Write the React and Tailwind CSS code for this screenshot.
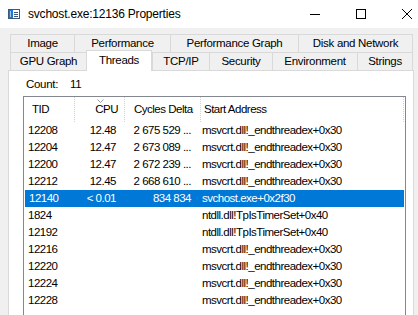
import React from "react";

const rows = [
  { tid: "12208", cpu: "12.48", cycles: "2 675 529 ...", addr: "msvcrt.dll!_endthreadex+0x30" },
  { tid: "12204", cpu: "12.47", cycles: "2 673 089 ...", addr: "msvcrt.dll!_endthreadex+0x30" },
  { tid: "12200", cpu: "12.47", cycles: "2 672 239 ...", addr: "msvcrt.dll!_endthreadex+0x30" },
  { tid: "12212", cpu: "12.45", cycles: "2 668 610 ...", addr: "msvcrt.dll!_endthreadex+0x30" },
  { tid: "12140", cpu: "< 0.01", cycles: "834 834", addr: "svchost.exe+0x2f30", selected: true },
  { tid: "1824", cpu: "", cycles: "", addr: "ntdll.dll!TpIsTimerSet+0x40" },
  { tid: "12192", cpu: "", cycles: "", addr: "ntdll.dll!TpIsTimerSet+0x40" },
  { tid: "12216", cpu: "", cycles: "", addr: "msvcrt.dll!_endthreadex+0x30" },
  { tid: "12220", cpu: "", cycles: "", addr: "msvcrt.dll!_endthreadex+0x30" },
  { tid: "12224", cpu: "", cycles: "", addr: "msvcrt.dll!_endthreadex+0x30" },
  { tid: "12228", cpu: "", cycles: "", addr: "msvcrt.dll!_endthreadex+0x30" },
];

const topTabs = [
  { label: "Image", w: "w-[64px]" },
  { label: "Performance", w: "w-[96px]" },
  { label: "Performance Graph", w: "w-[128px]" },
  { label: "Disk and Network", w: "w-[115px]" },
];

const bottomTabs = [
  { label: "GPU Graph", w: "w-[76px]" },
  { label: "Threads", w: "w-[66px]", active: true },
  { label: "TCP/IP", w: "w-[57px]" },
  { label: "Security", w: "w-[63px]" },
  { label: "Environment", w: "w-[85px]" },
  { label: "Strings", w: "w-[56px]" },
];

function Tab({ label, w, active, last }) {
  if (active) {
    return (
      <div
        className={`${w} relative z-10 -mt-[2px] h-[21px] bg-white border-t border-l border-r border-[#d9d9d9] flex items-center justify-center pb-[1px] whitespace-nowrap`}
      >
        {label}
      </div>
    );
  }
  return (
    <div
      className={`${w} h-[18px] bg-[#f0f0f0] border-t border-l border-[#d9d9d9] ${last ? "border-r" : ""} flex items-center justify-center whitespace-nowrap`}
    >
      {label}
    </div>
  );
}

export default function App() {
  return (
    <div className="w-[418px] h-[315px] overflow-hidden bg-[#f0f0f0] text-[12px] text-black font-['Liberation_Sans',sans-serif] leading-none">
      {/* title bar */}
      <div className="h-[28px] bg-white flex items-center">
        <svg className="ml-[8px]" width="12" height="10" viewBox="0 0 12 10">
          <rect x="0.5" y="0.5" width="11" height="9" fill="#fff" stroke="#3c5a78" />
          <rect x="1" y="1" width="4" height="8" fill="#1e78d7" />
          <rect x="2" y="2" width="1" height="6" fill="#9cc8f0" />
          <rect x="6" y="3" width="4" height="1" fill="#3c5a78" />
          <rect x="6" y="5" width="4" height="1" fill="#3c5a78" />
          <rect x="6" y="7" width="4" height="1" fill="#3c5a78" />
        </svg>
        <span className="ml-[8px] text-[12px] tracking-[-0.2px] whitespace-nowrap">svchost.exe:12136 Properties</span>
        <div className="ml-auto flex h-full">
          <div className="w-[46px] flex items-center justify-center">
            <div className="w-[10px] h-px bg-black" />
          </div>
          <div className="w-[46px] flex items-center justify-center">
            <div className="w-[10px] h-[10px] border border-black" />
          </div>
          <div className="w-[34px] flex items-center pl-[18px]">
            <svg width="10" height="10" viewBox="0 0 10 10">
              <path d="M0 0L10 10M10 0L0 10" stroke="#000" strokeWidth="1" fill="none" />
            </svg>
          </div>
        </div>
      </div>

      {/* tabs */}
      <div className="pt-[6px] pl-[8px] text-[11.5px] tracking-[-0.3px]">
        <div className="ml-[2px] flex">
          {topTabs.map((t, i) => (
            <Tab key={t.label} {...t} last={i === topTabs.length - 1} />
          ))}
        </div>
        <div className="ml-[2px] flex items-start h-[18px]">
          {bottomTabs.map((t, i) => (
            <Tab key={t.label} {...t} last={i === bottomTabs.length - 1} />
          ))}
        </div>

        {/* panel */}
        <div className="w-[406px] h-[260px] bg-white border border-[#d9d9d9]">
          <div className="pl-[17px] pt-[7px] h-[14px] flex items-center box-content">
            <span>Count:</span>
            <span className="ml-[12px]">11</span>
          </div>

          <div className="ml-[14px] mt-[4px] w-[383px] h-[230px] border border-[#828790] bg-white tracking-[-0.5px]">
            {/* header */}
            <div className="flex h-[25px] whitespace-nowrap">
              <div className="w-[51px] h-full border-r border-dotted border-[#c5d3e2] flex items-center pl-[8px]">
                TID
              </div>
              <div className="relative w-[50px] h-full border-r border-dotted border-[#c5d3e2] flex items-center justify-end pr-[6px]">
                <svg className="absolute left-[22px] top-[2px]" width="7" height="4" viewBox="0 0 7 4">
                  <path d="M0.5 0.5L3.5 3.5L6.5 0.5" stroke="#9a9a9a" strokeWidth="1" fill="none" />
                </svg>
                CPU
              </div>
              <div className="w-[76px] h-full border-r border-dotted border-[#c5d3e2] flex items-center pl-[9px]">
                Cycles Delta
              </div>
              <div className="w-[203px] h-full border-r border-dotted border-[#c5d3e2] flex items-center pl-[3px]">
                Start Address
              </div>
            </div>

            {/* rows */}
            {rows.map((r) => (
              <div
                key={r.tid}
                className={`flex h-[17px] items-center whitespace-nowrap ${r.selected ? "bg-[#0078d7] text-white ml-px w-[379px]" : ""}`}
              >
                <div className={`${r.selected ? "w-[50px]" : "w-[51px]"} pl-[4px]`}>{r.tid}</div>
                <div className="w-[50px] text-right pr-[9px]">{r.cpu}</div>
                <div className="w-[76px] text-right pr-[10px]">{r.cycles}</div>
                <div className="pl-[1px]">{r.addr}</div>
              </div>
            ))}
          </div>
        </div>
      </div>
    </div>
  );
}
